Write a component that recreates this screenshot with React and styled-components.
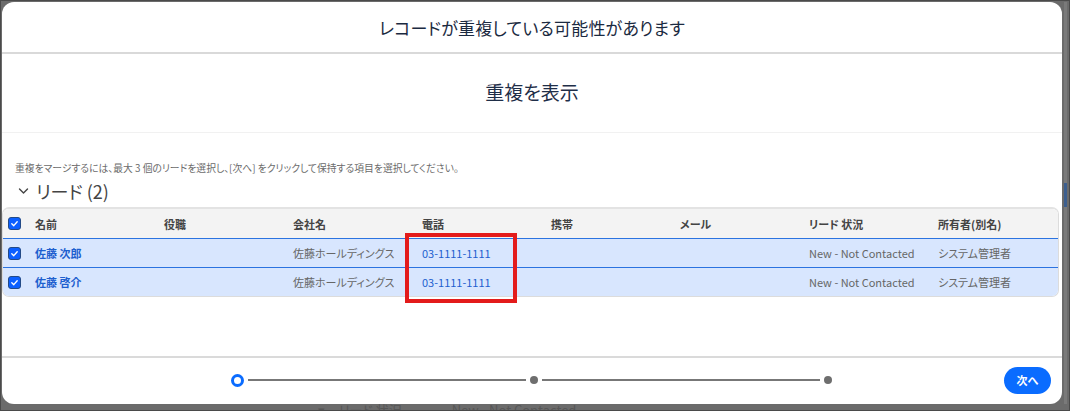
import React from "react";
import styled, { createGlobalStyle } from "styled-components";

const GlobalStyle = createGlobalStyle`
  html, body { margin: 0; padding: 0; background: #6b6b6b; }
  body {
    font-family: "Noto Sans CJK JP", "Noto Sans", sans-serif;
    font-feature-settings: "palt";
    -webkit-font-smoothing: antialiased;
  }
  * { box-sizing: border-box; }
`;

const Frame = styled.div`
  width: 1070px;
  height: 411px;
  border: 1px solid #4a4a4a;
  background: #6b6b6b;
  padding: 1px 0 0 1px;
  display: flex;
  flex-direction: column;
  overflow: hidden;
`;

const Stage = styled.div`
  display: flex;
  flex: none;
`;

const Modal = styled.div`
  width: 1060px;
  height: 402px;
  background: #fff;
  border-radius: 12px;
  display: flex;
  flex-direction: column;
  overflow: hidden;
`;

const Gutter = styled.div`
  flex: 1;
  display: flex;
  justify-content: flex-start;
  padding-left: 2px;
`;

const GutterBand = styled.div`
  width: 3px;
  background: #7a7a7a;
  display: flex;
  flex-direction: column;
  padding-top: 181px;
`;

const GutterMark = styled.div`
  height: 24px;
  background: #3d5f8e;
`;

const Header = styled.header`
  height: 52px;
  flex: none;
  display: flex;
  align-items: center;
  justify-content: center;
  border-bottom: 2px solid #d9d9d9;
`;

const Title = styled.h1`
  margin: 0;
  font-size: 17px;
  font-weight: 400;
  color: #1b2a41;
  letter-spacing: 0.2px;
`;

const SubHeader = styled.div`
  height: 79px;
  flex: none;
  display: flex;
  align-items: center;
  justify-content: center;
  border-bottom: 1px solid #f1f1f1;
`;

const SubTitle = styled.h2`
  margin: 0;
  font-size: 19px;
  font-weight: 400;
  color: #1f2e48;
  padding-bottom: 3px;
`;

const Body = styled.section`
  flex: 1;
  padding: 27px 3px 0 0;
  display: flex;
  flex-direction: column;
`;

const Hint = styled.p`
  margin: 0 0 0 13px;
  font-size: 9.8px;
  line-height: 16px;
  color: #6b6b6b;
`;

const SectionTitle = styled.div`
  display: flex;
  align-items: center;
  gap: 7px;
  height: 28px;
  margin-top: 1px;
  padding-left: 16px;
  color: #444;
  font-size: 18px;
`;

const TableWrap = styled.div`
  margin-top: 2px;
  position: relative;
`;

const Table = styled.div`
  border: 1px solid #dcdcdc;
  border-top: 2px solid #e3e3e3;
  border-radius: 7px;
  overflow: hidden;
`;

const Row = styled.div`
  display: grid;
  grid-template-columns: 32px repeat(7, 129px) 1fr;
  align-items: center;
  height: 29px;
  background: ${(p) => (p.$head ? "#f3f3f3" : "#d8e6fe")};
  border-top: ${(p) => (p.$head ? "none" : "1px solid #2b73e0")};
  font-size: 11px;
`;

const HeadCell = styled.div`
  color: #444;
  font-weight: 700;
  white-space: nowrap;
`;

const Cell = styled.div`
  white-space: nowrap;
  color: ${(p) => (p.$link ? "#1d5fcf" : "#666")};
  font-weight: ${(p) => (p.$bold ? 700 : 400)};
  font-size: 11px;
`;

const CheckCell = styled.div`
  display: flex;
  align-items: center;
  padding-left: 5px;
`;

const Box = styled.span`
  width: 13px;
  height: 13px;
  border-radius: 3px;
  background: #0b5fff;
  border: 1px solid #234a86;
  display: flex;
  align-items: center;
  justify-content: center;
`;

const Highlight = styled.div`
  position: absolute;
  left: 403px;
  top: 26px;
  width: 112px;
  height: 70px;
  border: 4px solid #e31b1b;
  pointer-events: none;
`;

const Footer = styled.footer`
  height: 48px;
  flex: none;
  border-top: 2px solid #dadada;
  display: grid;
  grid-template-columns: 1fr auto 1fr;
  align-items: center;
  padding: 0 11px 2px;
`;

const Progress = styled.div`
  grid-column: 2;
  width: 601px;
  display: flex;
  align-items: center;
  margin-left: -2px;
`;

const Ring = styled.span`
  width: 13px;
  height: 13px;
  border-radius: 50%;
  border: 3px solid #0b6cff;
  flex: none;
`;

const Dot = styled.span`
  width: 8px;
  height: 8px;
  border-radius: 50%;
  background: #6e6e6e;
  flex: none;
`;

const Track = styled.span`
  flex: 1;
  height: 2px;
  background: #777;
  margin: 0 4px;
`;

const NextButton = styled.button`
  grid-column: 3;
  justify-self: end;
  width: 47px;
  height: 27px;
  border: none;
  border-radius: 14px;
  background: #0a6cff;
  color: #fff;
  font-family: inherit;
  font-size: 11px;
  font-weight: 700;
  padding: 0;
`;

const Backdrop = styled.div`
  height: 8px;
  overflow: hidden;
  display: flex;
  padding-left: 316px;
  font-size: 13px;
  line-height: 16px;
  color: #575757;
`;

const Ghost = styled.span`
  margin-top: -2px;
  margin-right: ${(p) => p.$gap || 0}px;
`;

const Check = () => (
  <Box>
    <svg width="9" height="9" viewBox="0 0 10 10">
      <polyline points="2,5.3 4.2,7.4 8,3" fill="none" stroke="#fff" strokeWidth="1.5" strokeLinecap="round" strokeLinejoin="round" />
    </svg>
  </Box>
);

const Chevron = () => (
  <svg width="11" height="8" viewBox="0 0 11 8">
    <polyline points="1.5,2 5.5,6 9.5,2" fill="none" stroke="#444" strokeWidth="1.4" strokeLinecap="round" strokeLinejoin="round" />
  </svg>
);

const headers = ["名前", "役職", "会社名", "電話", "携帯", "メール", "リード 状況", "所有者(別名)"];

const leads = [
  { name: "佐藤 次郎", company: "佐藤ホールディングス", phone: "03-1111-1111", status: "New - Not Contacted", owner: "システム管理者" },
  { name: "佐藤 啓介", company: "佐藤ホールディングス", phone: "03-1111-1111", status: "New - Not Contacted", owner: "システム管理者" },
];

export default function App() {
  return (
    <>
      <GlobalStyle />
      <Frame>
        <Stage>
          <Modal>
            <Header>
              <Title>レコードが重複している可能性があります</Title>
            </Header>
            <SubHeader>
              <SubTitle>重複を表示</SubTitle>
            </SubHeader>
            <Body>
              <Hint>重複をマージするには、最大 3 個のリードを選択し、[次へ] をクリックして保持する項目を選択してください。</Hint>
              <SectionTitle>
                <Chevron />
                <span>リード (2)</span>
              </SectionTitle>
              <TableWrap>
                <Table>
                  <Row $head>
                    <CheckCell><Check /></CheckCell>
                    {headers.map((h) => (
                      <HeadCell key={h}>{h}</HeadCell>
                    ))}
                  </Row>
                  {leads.map((l) => (
                    <Row key={l.name}>
                      <CheckCell><Check /></CheckCell>
                      <Cell $link $bold>{l.name}</Cell>
                      <Cell />
                      <Cell>{l.company}</Cell>
                      <Cell $link>{l.phone}</Cell>
                      <Cell />
                      <Cell />
                      <Cell>{l.status}</Cell>
                      <Cell>{l.owner}</Cell>
                    </Row>
                  ))}
                </Table>
                <Highlight />
              </TableWrap>
            </Body>
            <Footer>
              <Progress>
                <Ring />
                <Track />
                <Dot />
                <Track />
                <Dot />
              </Progress>
              <NextButton>次へ</NextButton>
            </Footer>
          </Modal>
          <Gutter>
            <GutterBand>
              <GutterMark />
            </GutterBand>
          </Gutter>
        </Stage>
        <Backdrop>
          <Ghost $gap={14}>▾</Ghost>
          <Ghost $gap={50}>リード 状況</Ghost>
          <Ghost>New - Not Contacted</Ghost>
        </Backdrop>
      </Frame>
    </>
  );
}
